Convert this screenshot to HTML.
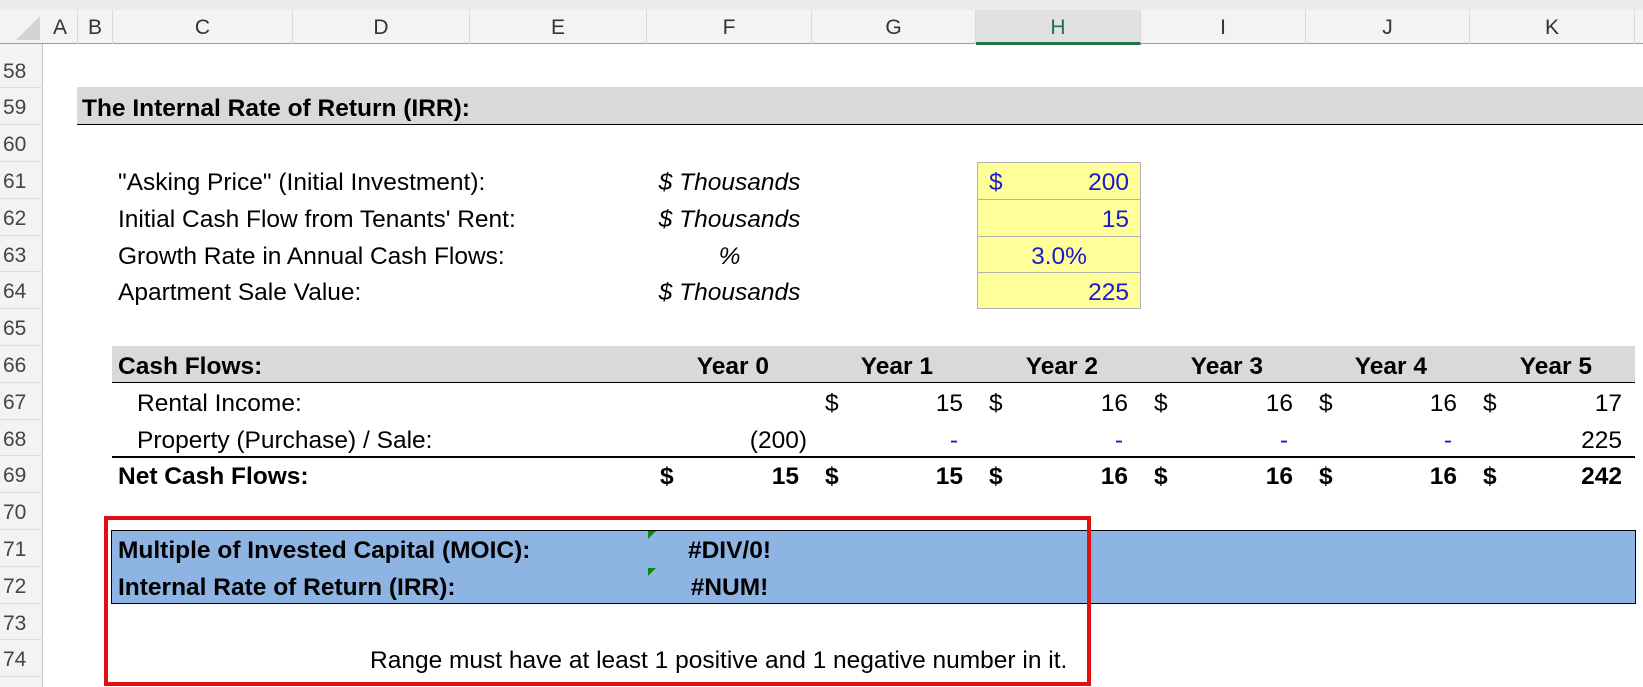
<!DOCTYPE html>
<html><head><meta charset="utf-8"><style>
*{margin:0;padding:0;box-sizing:border-box}
body{width:1643px;height:687px;overflow:hidden;background:#fff;position:relative;font-family:"Liberation Sans",Arial,sans-serif;font-size:24.5px;color:#000}
.a{position:absolute;white-space:nowrap;line-height:36.8px;height:36.8px;margin-top:3px}
.b{font-weight:bold}
.blue{color:#1a1ad0}
.i{font-style:italic}
.r{text-align:right}
.c{text-align:center}
.hd{position:absolute;top:10px;height:34px;line-height:36px;text-align:center;color:#333;font-size:21px;border-right:1px solid #dadada}
.rn{position:absolute;left:0;width:43px;height:36.8px;line-height:40px;padding-left:3px;color:#444;font-size:21px;border-bottom:1px solid #dedede}
</style></head><body>
<div style="position:absolute;left:0;top:0;width:1643px;height:10px;background:#e9ebee"></div>
<div style="position:absolute;left:0;top:10px;width:1643px;height:34px;background:#f3f3f3;border-bottom:1px solid #9e9e9e"></div>
<div style="position:absolute;left:0;top:44px;width:43px;height:643px;background:#f3f3f3;border-right:1px solid #c8c8c8"></div>
<svg style="position:absolute;left:14px;top:14px" width="28" height="28"><polygon points="26,2 26,26 2,26" fill="#d4d4d4"/></svg>
<div class="hd" style="left:43px;width:35px">A</div>
<div class="hd" style="left:78px;width:35px">B</div>
<div class="hd" style="left:113px;width:180px">C</div>
<div class="hd" style="left:293px;width:177px">D</div>
<div class="hd" style="left:470px;width:177px">E</div>
<div class="hd" style="left:647px;width:165px">F</div>
<div class="hd" style="left:812px;width:164px">G</div>
<div class="hd" style="left:976px;width:165px;background:#e1e1e1;color:#217346;border-bottom:3px solid #217346;height:35px">H</div>
<div class="hd" style="left:1141px;width:165px">I</div>
<div class="hd" style="left:1306px;width:164px">J</div>
<div class="hd" style="left:1470px;width:165px">K</div>

<div class="rn" style="top:51.6px">58</div>
<div class="rn" style="top:88.4px">59</div>
<div class="rn" style="top:125.2px">60</div>
<div class="rn" style="top:162px">61</div>
<div class="rn" style="top:198.8px">62</div>
<div class="rn" style="top:235.6px">63</div>
<div class="rn" style="top:272.4px">64</div>
<div class="rn" style="top:309.2px">65</div>
<div class="rn" style="top:346px">66</div>
<div class="rn" style="top:382.8px">67</div>
<div class="rn" style="top:419.6px">68</div>
<div class="rn" style="top:456.4px">69</div>
<div class="rn" style="top:493.2px">70</div>
<div class="rn" style="top:530px">71</div>
<div class="rn" style="top:566.8px">72</div>
<div class="rn" style="top:603.6px">73</div>
<div class="rn" style="top:640.4px">74</div>

<div style="position:absolute;left:77px;top:87px;width:1566px;height:38px;background:#d9d9d9;border-bottom:1.5px solid #000"></div>
<div class="a b" style="left:82px;top:88px">The Internal Rate of Return (IRR):</div>

<div class="a" style="left:118px;top:162px">"Asking Price" (Initial Investment):</div>
<div class="a" style="left:118px;top:198.8px">Initial Cash Flow from Tenants' Rent:</div>
<div class="a" style="left:118px;top:235.6px">Growth Rate in Annual Cash Flows:</div>
<div class="a" style="left:118px;top:272.4px">Apartment Sale Value:</div>
<div class="a i c" style="left:647px;width:165px;top:162px">$ Thousands</div>
<div class="a i c" style="left:647px;width:165px;top:198.8px">$ Thousands</div>
<div class="a i c" style="left:647px;width:165px;top:235.6px">%</div>
<div class="a i c" style="left:647px;width:165px;top:272.4px">$ Thousands</div>

<div style="position:absolute;left:977px;top:162px;width:164px;height:147px;background:#ffff99;border:1px solid #b2b2b2"></div>
<div style="position:absolute;left:977px;top:198.8px;width:164px;height:1px;background:#b2b2b2"></div>
<div style="position:absolute;left:977px;top:235.6px;width:164px;height:1px;background:#b2b2b2"></div>
<div style="position:absolute;left:977px;top:272.4px;width:164px;height:1px;background:#b2b2b2"></div>
<div class="a blue" style="left:989px;top:162px">$</div>
<div class="a blue r" style="left:977px;width:152px;top:162px">200</div>
<div class="a blue r" style="left:977px;width:152px;top:198.8px">15</div>
<div class="a blue c" style="left:977px;width:164px;top:235.6px">3.0%</div>
<div class="a blue r" style="left:977px;width:152px;top:272.4px">225</div>

<div style="position:absolute;left:112px;top:346px;width:1523px;height:37px;background:#d9d9d9;border-bottom:1.5px solid #000"></div>
<div class="a b" style="left:118px;top:346px">Cash Flows:</div>
<div class="a b r" style="left:647px;width:122px;top:346px">Year 0</div>
<div class="a b r" style="left:812px;width:121px;top:346px">Year 1</div>
<div class="a b r" style="left:976px;width:122px;top:346px">Year 2</div>
<div class="a b r" style="left:1141px;width:122px;top:346px">Year 3</div>
<div class="a b r" style="left:1306px;width:121px;top:346px">Year 4</div>
<div class="a b r" style="left:1470px;width:122px;top:346px">Year 5</div>

<div class="a" style="left:137px;top:382.8px">Rental Income:</div>
<div class="a" style="left:137px;top:419.6px">Property (Purchase) / Sale:</div>
<div style="position:absolute;left:112px;top:456px;width:1523px;height:1.5px;background:#000"></div>
<div class="a b" style="left:118px;top:456.4px">Net Cash Flows:</div>

<div class="a r" style="left:647px;width:160px;top:419.6px">(200)</div>

<div class="a" style="left:825px;top:382.8px">$</div><div class="a r" style="left:812px;width:151px;top:382.8px">15</div>
<div class="a" style="left:989px;top:382.8px">$</div><div class="a r" style="left:976px;width:152px;top:382.8px">16</div>
<div class="a" style="left:1154px;top:382.8px">$</div><div class="a r" style="left:1141px;width:152px;top:382.8px">16</div>
<div class="a" style="left:1319px;top:382.8px">$</div><div class="a r" style="left:1306px;width:151px;top:382.8px">16</div>
<div class="a" style="left:1483px;top:382.8px">$</div><div class="a r" style="left:1470px;width:152px;top:382.8px">17</div>

<div class="a blue r" style="left:812px;width:146px;top:419.6px">-</div>
<div class="a blue r" style="left:976px;width:147px;top:419.6px">-</div>
<div class="a blue r" style="left:1141px;width:147px;top:419.6px">-</div>
<div class="a blue r" style="left:1306px;width:146px;top:419.6px">-</div>
<div class="a r" style="left:1470px;width:152px;top:419.6px">225</div>

<div class="a b" style="left:660px;top:456.4px">$</div><div class="a b r" style="left:647px;width:152px;top:456.4px">15</div>
<div class="a b" style="left:825px;top:456.4px">$</div><div class="a b r" style="left:812px;width:151px;top:456.4px">15</div>
<div class="a b" style="left:989px;top:456.4px">$</div><div class="a b r" style="left:976px;width:152px;top:456.4px">16</div>
<div class="a b" style="left:1154px;top:456.4px">$</div><div class="a b r" style="left:1141px;width:152px;top:456.4px">16</div>
<div class="a b" style="left:1319px;top:456.4px">$</div><div class="a b r" style="left:1306px;width:151px;top:456.4px">16</div>
<div class="a b" style="left:1483px;top:456.4px">$</div><div class="a b r" style="left:1470px;width:152px;top:456.4px">242</div>

<div style="position:absolute;left:111px;top:530px;width:1525px;height:74px;background:#8db4e2;border:1px solid #000"></div>
<svg style="position:absolute;left:648px;top:531px" width="10" height="10"><polygon points="0,0 8,0 0,8" fill="#0a8a0a"/></svg>
<svg style="position:absolute;left:648px;top:568px" width="10" height="10"><polygon points="0,0 8,0 0,8" fill="#0a8a0a"/></svg>
<div class="a b" style="left:118px;top:530px">Multiple of Invested Capital (MOIC):</div>
<div class="a b" style="left:118px;top:566.8px">Internal Rate of Return (IRR):</div>
<div class="a b c" style="left:647px;width:165px;top:530px">#DIV/0!</div>
<div class="a b c" style="left:647px;width:165px;top:566.8px">#NUM!</div>

<div class="a" style="left:370px;top:640.4px;width:718px;overflow:visible">Range must have at least 1 positive and 1 negative number in it.</div>

<div style="position:absolute;left:104px;top:516px;width:987px;height:170px;border:4px solid #e01010"></div>
</body></html>
